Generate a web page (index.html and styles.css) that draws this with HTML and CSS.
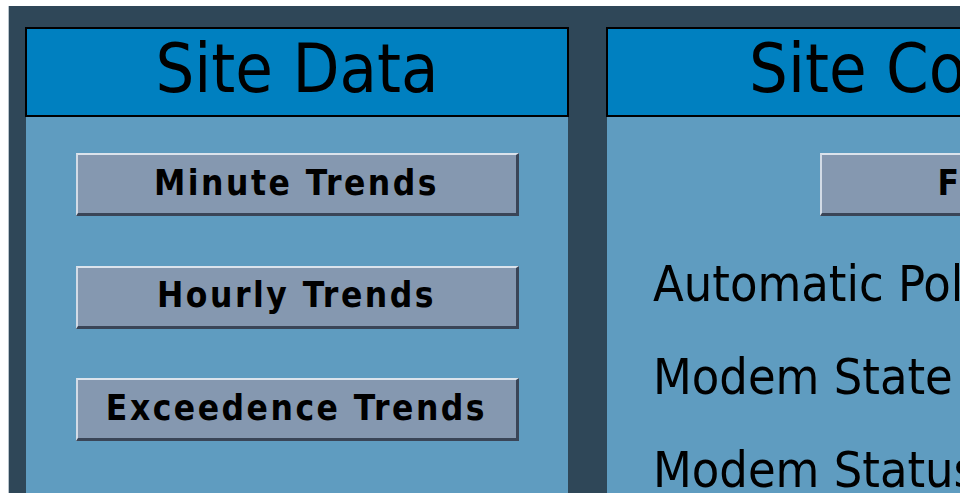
FILE: index.html
```html
<!DOCTYPE html>
<html lang="en">
<head>
<meta charset="utf-8">
<title>Site Overview</title>
<link rel="stylesheet" href="styles.css">
</head>
<body>
<div class="screen">
  <section class="panel panel-data">
    <header class="panel-title">Site Data</header>
    <div class="panel-body">
      <button class="hmi-btn">Minute Trends</button>
      <button class="hmi-btn">Hourly Trends</button>
      <button class="hmi-btn">Exceedence Trends</button>
    </div>
  </section>
  <section class="panel panel-control">
    <header class="panel-title">Site Control</header>
    <div class="panel-body">
      <button class="hmi-btn">Force Polling</button>
      <ul class="status-list">
        <li>Automatic Polling</li>
        <li>Modem State</li>
        <li>Modem Status</li>
      </ul>
    </div>
  </section>
</div>
</body>
</html>
```
FILE: styles.css
```css
html, body {
  background: #ffffff;
}

body {
  margin: 6px 0 0 8px;
  overflow: hidden;
  height: 487px;
  font-family: "DejaVu Sans Condensed", "DejaVu Sans", sans-serif;
  font-stretch: condensed;
  color: #000000;
}

.screen {
  display: flex;
  align-items: flex-start;
  gap: 37px;
  width: 1400px;
  height: 600px;
  padding: 21px 0 0 16px;
  box-sizing: border-box;
  background: #2f4758;
  border-left: 1px solid #b9c4cc;
}

.panel {
  flex: none;
  display: flex;
  flex-direction: column;
  height: 560px;
}

.panel-data {
  width: 544px;
}

.panel-control {
  width: 644px;
}

.panel-title {
  display: flex;
  align-items: center;
  justify-content: center;
  padding-bottom: 6px;
  height: 80px;
  background: #0080c0;
  border: 2px solid #000000;
  font-size: 68px;
  line-height: 1;
  white-space: nowrap;
}

.panel-body {
  flex: 1;
  margin: 0 1px;
  padding-top: 36px;
  background: #5f9cc0;
  display: flex;
  flex-direction: column;
}

.panel-data .panel-body {
  align-items: center;
  gap: 49.5px;
}

.panel-control .panel-body {
  padding-left: 213px;
}

.hmi-btn {
  flex: none;
  width: 443px;
  height: 63px;
  padding: 0 0 3px;
  box-sizing: border-box;
  background: #8598b0;
  border-style: solid;
  border-width: 2px 3px 3px 2px;
  border-color: #dbe3ec #3a4557 #3a4557 #d2dbe6;
  font-family: "DejaVu Sans Condensed", "DejaVu Sans", sans-serif;
  font-stretch: condensed;
  font-weight: bold;
  font-size: 35px;
  letter-spacing: 2.5px;
  color: #000000;
  white-space: nowrap;
  cursor: pointer;
}

.panel-control .hmi-btn {
  padding-left: 56px;
}

.status-list {
  list-style: none;
  margin: 22px 0 0 -167px;
  padding: 0;
  font-size: 50px;
  line-height: 93px;
  white-space: nowrap;
}
```
